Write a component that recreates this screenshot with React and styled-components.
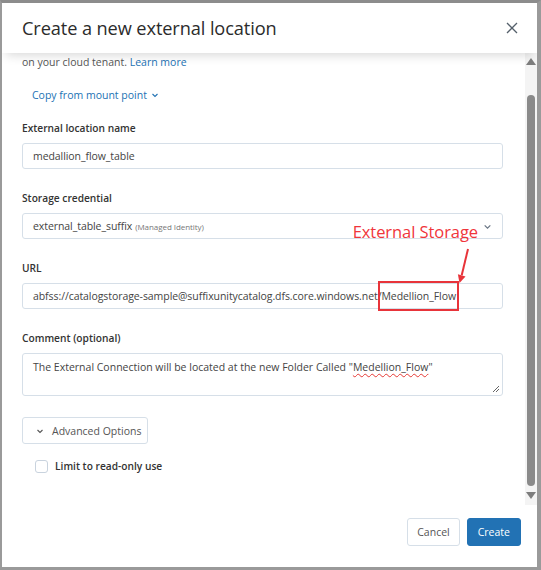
import React from "react";
import styled, { createGlobalStyle } from "styled-components";

const GlobalStyle = createGlobalStyle`
  html, body {
    margin: 0;
    padding: 0;
    background: #ffffff;
  }
  body {
    font-family: "Open Sans", "Noto Sans", "Liberation Sans", sans-serif;
    color: #333;
  }
`;

const Frame = styled.div`
  width: 541px;
  height: 570px;
  box-sizing: border-box;
  border-top: 3px solid #8c8c8c;
  border-left: 2px solid #9a9a9a;
  border-right: 4px solid #9a9a9a;
  border-bottom: 3px solid #9a9a9a;
  display: flex;
  flex-direction: column;
  background: #fff;
  overflow: hidden;
`;

const Header = styled.div`
  height: 50px;
  flex: none;
  display: flex;
  align-items: center;
  justify-content: space-between;
  padding: 0 17px 0 20px;
  position: relative;
  z-index: 2;
  background: #fff;
  box-shadow: 0 6px 10px -4px rgba(0, 0, 0, 0.16);
`;

const Title = styled.h1`
  margin: 0;
  font-size: 18.2px;
  font-weight: 400;
  color: #2b2b2b;
  letter-spacing: -0.1px;
`;

const CloseButton = styled.button`
  border: none;
  background: none;
  padding: 0;
  width: 16px;
  height: 16px;
  display: flex;
  align-items: center;
  justify-content: center;
  cursor: pointer;
`;

const Body = styled.div`
  flex: 1;
  display: flex;
  min-height: 0;
`;

const Content = styled.div`
  flex: 1;
  padding: 1px 22px 0 20px;
  display: flex;
  flex-direction: column;
`;

const Intro = styled.p`
  margin: 0;
  font-size: 10.5px;
  line-height: 16px;
  color: #555;
`;

const Link = styled.a`
  color: #2272b4;
  text-decoration: none;
`;

const MountLink = styled.a`
  margin: 17px 0 0 10px;
  font-size: 10.5px;
  line-height: 16px;
  color: #2272b4;
  display: flex;
  align-items: center;
  gap: 4px;
`;

const Field = styled.div`
  margin-top: ${(p) => p.$top || 21}px;
  display: flex;
  flex-direction: column;
  gap: 7px;
  position: relative;
`;

const Label = styled.label`
  font-size: 10.2px;
  line-height: 16px;
  font-weight: 600;
  color: #333;
`;

const Box = styled.div`
  height: 26px;
  box-sizing: border-box;
  border: 1px solid #d6dfe8;
  border-radius: 3px;
  padding: 0 10px;
  display: flex;
  align-items: center;
  justify-content: space-between;
  font-size: 10.5px;
  letter-spacing: -0.07px;
  color: #444;
  position: relative;
  white-space: nowrap;
`;

const Hint = styled.span`
  font-size: 8px;
  color: #777;
  margin-left: 3px;
`;

const Highlight = styled.span`
  position: relative;
  &::after {
    content: "";
    position: absolute;
    left: -3px;
    right: -3px;
    top: -8px;
    bottom: -8px;
    border: 2px solid #e8343a;
  }
`;

const Annotation = styled.div`
  position: absolute;
  right: 24px;
  bottom: -5px;
  font-size: 16.5px;
  color: #f0353b;
  z-index: 3;
  pointer-events: none;
`;

const ArrowSvg = styled.svg`
  position: absolute;
  left: 433px;
  top: 34px;
  z-index: 3;
`;

const TextArea = styled.div`
  height: 43px;
  box-sizing: border-box;
  border: 1px solid #d6dfe8;
  border-radius: 3px;
  padding: 6px 10px;
  font-size: 10.5px;
  line-height: 15px;
  color: #444;
  position: relative;
`;

const Squiggle = styled.span`
  text-decoration: underline wavy #e53935;
  text-decoration-thickness: 1px;
  text-underline-offset: 2px;
`;

const Grip = styled.svg`
  position: absolute;
  right: 2px;
  bottom: 2px;
`;

const AdvancedButton = styled.button`
  margin-top: 21px;
  align-self: flex-start;
  height: 27px;
  box-sizing: border-box;
  width: 126px;
  border: 1px solid #d6dfe8;
  border-radius: 3px;
  background: #fff;
  font-family: inherit;
  font-size: 10.5px;
  color: #555;
  display: flex;
  align-items: center;
  gap: 8px;
  padding: 0 0 0 13px;
`;

const CheckRow = styled.label`
  margin: 15px 0 0 13px;
  display: flex;
  align-items: center;
  gap: 7px;
  font-size: 10.2px;
  font-weight: 600;
  color: #333;
`;

const CheckBox = styled.span`
  width: 13px;
  height: 13px;
  box-sizing: border-box;
  border: 1px solid #c9d3de;
  border-radius: 3px;
`;

const Scrollbar = styled.div`
  width: 12px;
  flex: none;
  background: #f4f4f4;
  display: flex;
  flex-direction: column;
  align-items: center;
  padding: 5px 0 6px;
`;

const Thumb = styled.div`
  width: 8px;
  border-radius: 4px;
  background: #8a8a8a;
  margin: 30px 0 6px;
  flex: 1;
`;

const Footer = styled.div`
  height: 62px;
  flex: none;
  display: flex;
  justify-content: flex-end;
  align-items: flex-start;
  gap: 7px;
  padding: 13px 16px 0 0;
  box-sizing: border-box;
`;

const Button = styled.button`
  height: 28px;
  box-sizing: border-box;
  padding: 0 ${(p) => (p.$primary ? 10 : 9)}px;
  border-radius: 3px;
  border: 1px solid ${(p) => (p.$primary ? "#2272b4" : "#d6dfe8")};
  background: ${(p) => (p.$primary ? "#2272b4" : "#fff")};
  color: ${(p) => (p.$primary ? "#fff" : "#555")};
  font-family: inherit;
  font-size: 10.5px;
`;

const Chevron = ({ color = "#2272b4", size = 8 }) => (
  <svg width={size} height={size} viewBox="0 0 8 8">
    <path d="M1.5 3 L4 5.5 L6.5 3" fill="none" stroke={color} strokeWidth="1.1" />
  </svg>
);

const Triangle = ({ up }) => (
  <svg width="10" height="7" viewBox="0 0 10 7">
    <path d={up ? "M5 0 L10 7 L0 7 Z" : "M0 0 L10 0 L5 7 Z"} fill="#7d7d7d" />
  </svg>
);

export default function App() {
  return (
    <>
      <GlobalStyle />
      <Frame>
        <Header>
          <Title>Create a new external location</Title>
          <CloseButton aria-label="Close">
            <svg width="12" height="12" viewBox="0 0 12 12">
              <path d="M1 1 L11 11 M11 1 L1 11" stroke="#55606b" strokeWidth="1.3" />
            </svg>
          </CloseButton>
        </Header>
        <Body>
          <Content>
            <Intro>
              on your cloud tenant. <Link>Learn more</Link>
            </Intro>
            <MountLink>
              Copy from mount point <Chevron />
            </MountLink>
            <Field $top={17}>
              <Label>External location name</Label>
              <Box>medallion_flow_table</Box>
            </Field>
            <Field>
              <Label>Storage credential</Label>
              <Box>
                <span>
                  external_table_suffix<Hint>(Managed Identity)</Hint>
                </span>
                <Chevron color="#6b7785" size={9} />
                <Annotation>External Storage</Annotation>
                <ArrowSvg width="16" height="36" viewBox="0 0 16 36">
                  <path d="M12 1 L5.7 27.3" stroke="#e8343a" strokeWidth="2" fill="none" />
                  <path d="M9.5 28.4 L3.5 35 L1.9 26.2 Z" fill="#e8343a" />
                </ArrowSvg>
              </Box>
            </Field>
            <Field>
              <Label>URL</Label>
              <Box>
                <span>
                  abfss://catalogstorage-sample@suffixunitycatalog.dfs.core.windows.net/
                  <Highlight>Medellion_Flow</Highlight>
                </span>
              </Box>
            </Field>
            <Field>
              <Label>Comment (optional)</Label>
              <TextArea>
                The External Connection will be located at the new Folder Called "
                <Squiggle>Medellion_Flow</Squiggle>"
                <Grip width="8" height="8" viewBox="0 0 8 8">
                  <path d="M7 1 L1 7 M7 4 L4 7" stroke="#666" strokeWidth="1" />
                </Grip>
              </TextArea>
            </Field>
            <AdvancedButton>
              <Chevron color="#555" />
              Advanced Options
            </AdvancedButton>
            <CheckRow>
              <CheckBox />
              Limit to read-only use
            </CheckRow>
          </Content>
          <Scrollbar>
            <Triangle up />
            <Thumb />
            <Triangle />
          </Scrollbar>
        </Body>
        <Footer>
          <Button>Cancel</Button>
          <Button $primary>Create</Button>
        </Footer>
      </Frame>
    </>
  );
}
